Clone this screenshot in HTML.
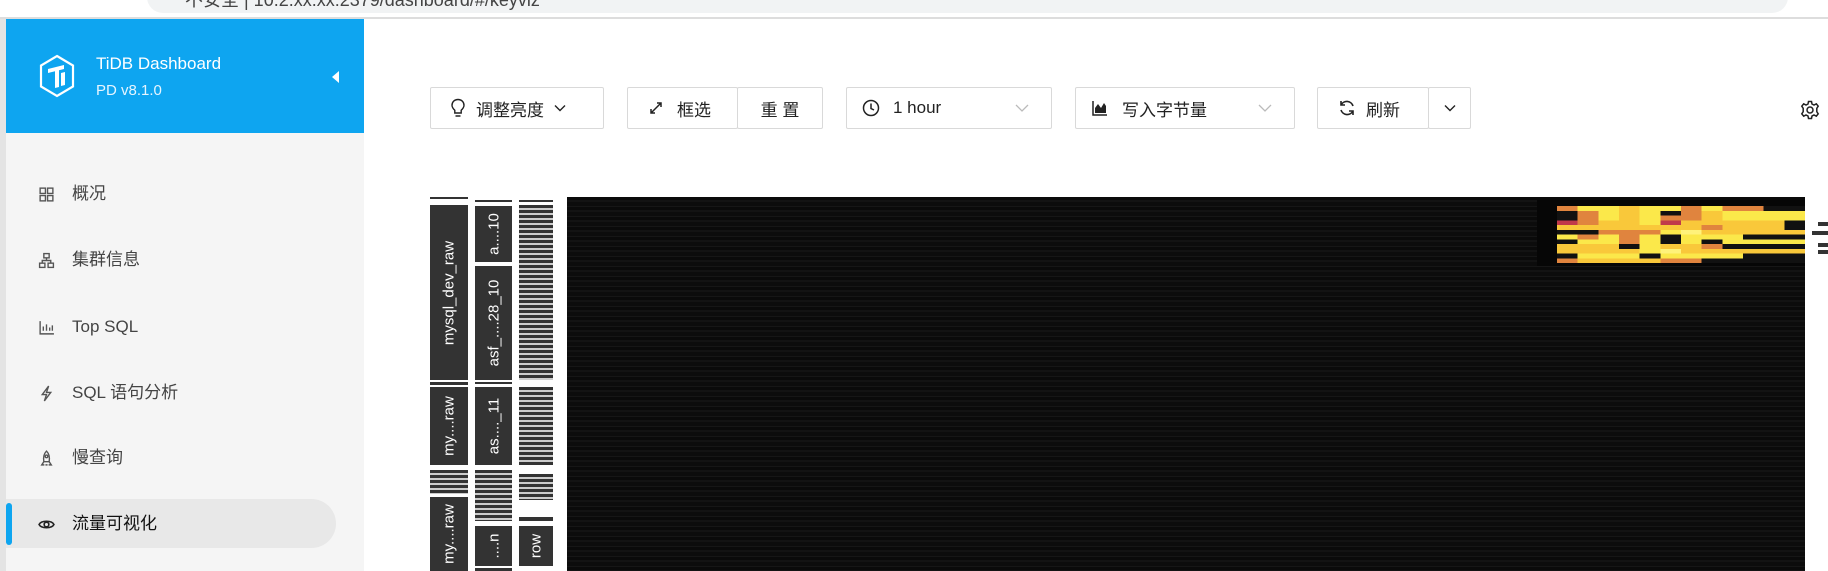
<!DOCTYPE html>
<html><head><meta charset="utf-8"><style>
*{margin:0;padding:0;box-sizing:border-box}
body{width:1828px;height:571px;overflow:hidden;background:#fff;font-family:"Liberation Sans","Noto Sans CJK SC",sans-serif;position:relative}
.abs{position:absolute}
.chrome{left:0;top:0;width:1828px;height:19px;background:#fff;border-bottom:2px solid #ddd}
.addr{left:147px;top:-20px;width:1641px;height:33px;background:#f1f3f4;border-radius:16px;overflow:hidden}
.side{left:0;top:19px;width:364px;height:552px;background:#f5f5f5;border-left:6px solid #e4e4e4}
.head{left:6px;top:19px;width:358px;height:114px;background:#0ea5f0}
.menu{left:72px;font-size:17px;color:#444;line-height:20px}
.mi{left:38px;width:17px;height:17px}
.btn{top:87px;height:42px;border:1px solid #d9d9d9;border-radius:2px;background:#fff;font-size:17px;color:#222;display:flex;align-items:center}
.lb{background:#333;color:#fff;font-size:15px}
.lb span{position:absolute;left:50%;top:50%;transform:translate(-50%,-50%) rotate(-90deg);white-space:nowrap}
.stripe{background:repeating-linear-gradient(#333 0 3px,#ccc 3px 5px)}
</style></head><body>
<div class="abs chrome"></div>
<div class="abs addr"><span class="abs" style="left:38px;top:6px;font-size:18px;color:#444">不安全 | 10.2.xx.xx:2379/dashboard/#/keyviz</span></div>

<div class="abs side"></div>
<div class="abs head"></div>
<svg class="abs" style="left:38px;top:54px" width="38" height="44" viewBox="0 0 38 44"><path d="M19 2 L35 11.5 V32.5 L19 42 L3 32.5 V11.5 Z" fill="none" stroke="#fff" stroke-width="2.2"/><path d="M10 15 L26 11 V15 L21 16.3 V33 L17 34 V17.3 L10 19 Z M23 19 L27 18 V31 L23 32 Z" fill="#fff"/></svg>
<div class="abs" style="left:96px;top:54px;font-size:17px;color:#fff">TiDB Dashboard</div>
<div class="abs" style="left:96px;top:82px;font-size:15px;color:#e6f5ff">PD v8.1.0</div>
<div class="abs" style="left:332px;top:71px;width:0;height:0;border-top:6px solid transparent;border-bottom:6px solid transparent;border-right:7px solid #fff"></div>

<div class="abs" style="left:6px;top:499px;width:330px;height:49px;background:#e8e8e8;border-radius:0 25px 25px 0"></div>
<div class="abs" style="left:6px;top:503px;width:6px;height:42px;background:#0ea5f0;border-radius:3px"></div>

<svg class="abs mi" style="top:186px" viewBox="0 0 16 16" fill="none" stroke="#555" stroke-width="1.3"><rect x="2" y="2" width="5" height="5"/><rect x="9" y="2" width="5" height="5"/><rect x="2" y="9" width="5" height="5"/><rect x="9" y="9" width="5" height="5"/></svg>
<div class="abs menu" style="top:184px">概况</div>
<svg class="abs mi" style="top:252px" viewBox="0 0 16 16" fill="none" stroke="#555" stroke-width="1.3"><rect x="5.5" y="1.5" width="5" height="4"/><rect x="1.5" y="10.5" width="5" height="4"/><rect x="9.5" y="10.5" width="5" height="4"/><path d="M8 5.5V8M4 10.5V8H12V10.5"/></svg>
<div class="abs menu" style="top:250px">集群信息</div>
<svg class="abs mi" style="top:319px" viewBox="0 0 16 16" fill="none" stroke="#555" stroke-width="1.3"><path d="M2 2V14H15M5 11V7M8 11V5M11 11V8M13.5 11V6"/></svg>
<div class="abs menu" style="top:317px">Top SQL</div>
<svg class="abs mi" style="top:385px" viewBox="0 0 16 16" fill="none" stroke="#555" stroke-width="1.3"><path d="M10 1L4 9H8L6 15L12 7H8Z"/></svg>
<div class="abs menu" style="top:383px">SQL 语句分析</div>
<svg class="abs mi" style="top:450px" viewBox="0 0 16 16" fill="none" stroke="#555" stroke-width="1.3"><path d="M8 1C5 4 5 8 5.5 11H10.5C11 8 11 4 8 1ZM5.5 11L3.5 14H6M10.5 11L12.5 14H10M7 14H9"/><circle cx="8" cy="6" r="1.2"/></svg>
<div class="abs menu" style="top:448px">慢查询</div>
<svg class="abs mi" style="top:516px" viewBox="0 0 16 16" fill="none" stroke="#222" stroke-width="1.5"><path d="M1 8C3 4 13 4 15 8C13 12 3 12 1 8Z"/><circle cx="8" cy="8" r="2.2"/></svg>
<div class="abs menu" style="top:514px;color:#111">流量可视化</div>

<!-- toolbar -->
<div class="abs btn" style="left:430px;width:174px"><svg style="margin-left:19px" width="16" height="20" viewBox="0 0 16 20" fill="none" stroke="#222" stroke-width="1.4"><path d="M8 1.5C4.5 1.5 2 4 2 7.2C2 9.5 3.5 11 4.8 12.3V15H11.2V12.3C12.5 11 14 9.5 14 7.2C14 4 11.5 1.5 8 1.5ZM5.5 18H10.5"/></svg><span style="margin-left:10px">调整亮度</span><svg style="margin-left:10px" width="12" height="8" viewBox="0 0 12 8" fill="none" stroke="#222" stroke-width="1.4"><path d="M1 1.5L6 6.5L11 1.5"/></svg></div>
<div class="abs btn" style="left:627px;width:111px"><svg style="margin-left:20px" width="16" height="16" viewBox="0 0 16 16" fill="none" stroke="#222" stroke-width="1.5"><path d="M3 13L13 3M9 3H13V7M3 9V13H7"/></svg><span style="margin-left:13px">框选</span></div>
<div class="abs btn" style="left:737px;width:86px;justify-content:center">重 置</div>
<div class="abs btn" style="left:846px;width:206px"><svg style="margin-left:15px" width="18" height="18" viewBox="0 0 18 18" fill="none" stroke="#222" stroke-width="1.5"><circle cx="9" cy="9" r="7.5"/><path d="M9 4.5V9.5L12 11"/></svg><span style="margin-left:13px">1 hour</span><svg style="margin-left:auto;margin-right:22px" width="14" height="8" viewBox="0 0 14 8" fill="none" stroke="#bbb" stroke-width="1.3"><path d="M1 1L7 7L13 1"/></svg></div>
<div class="abs btn" style="left:1075px;width:220px"><svg style="margin-left:16px" width="16" height="16" viewBox="0 0 16 16"><path d="M1 1V15H15" fill="none" stroke="#222" stroke-width="1.5"/><path d="M3 13V8L6 4L9 8L12 3L14 6V13Z" fill="#222"/></svg><span style="margin-left:14px">写入字节量</span><svg style="margin-left:auto;margin-right:22px" width="14" height="8" viewBox="0 0 14 8" fill="none" stroke="#bbb" stroke-width="1.3"><path d="M1 1L7 7L13 1"/></svg></div>
<div class="abs btn" style="left:1317px;width:112px"><svg style="margin-left:20px" width="18" height="18" viewBox="0 0 18 18" fill="none" stroke="#222" stroke-width="1.6"><path d="M15 7A6.5 6.5 0 0 0 3 6M3 11A6.5 6.5 0 0 0 15 12M3 2V6H7M15 16V12H11"/></svg><span style="margin-left:10px">刷新</span></div>
<div class="abs btn" style="left:1428px;width:43px;justify-content:center"><svg width="12" height="8" viewBox="0 0 12 8" fill="none" stroke="#222" stroke-width="1.4"><path d="M1 1.5L6 6.5L11 1.5"/></svg></div>
<svg class="abs" style="left:1800px;top:100px" width="20" height="20" viewBox="0 0 20 20" fill="none" stroke="#222" stroke-width="1.5"><path d="M8.5 1.5H11.5L12 4L14 5L16.3 3.8L18.2 6.2L16.8 8.3V11.7L18.2 13.8L16.3 16.2L14 15L12 16L11.5 18.5H8.5L8 16L6 15L3.7 16.2L1.8 13.8L3.2 11.7V8.3L1.8 6.2L3.7 3.8L6 5L8 4Z"/><circle cx="10" cy="10" r="3"/></svg>

<!-- labels -->
<div class="abs" style="left:430px;top:197px;width:38px;height:2px;background:#333"></div>
<div class="abs lb" style="left:430px;top:205px;width:38px;height:175px"><span>mysql_dev_raw</span></div>
<div class="abs" style="left:430px;top:382px;width:38px;height:3px;background:#333"></div>
<div class="abs lb" style="left:430px;top:387px;width:38px;height:78px"><span>my....raw</span></div>
<div class="abs stripe" style="left:430px;top:470px;width:38px;height:24px"></div>
<div class="abs lb" style="left:430px;top:497px;width:38px;height:74px"><span>my....raw</span></div>

<div class="abs" style="left:475px;top:200px;width:37px;height:2px;background:#333"></div>
<div class="abs lb" style="left:475px;top:206px;width:37px;height:56px"><span>a....10</span></div>
<div class="abs lb" style="left:475px;top:266px;width:37px;height:114px"><span>asf_....28_10</span></div>
<div class="abs" style="left:475px;top:382px;width:37px;height:2px;background:#333"></div>
<div class="abs lb" style="left:475px;top:387px;width:37px;height:78px"><span>as...._11</span></div>
<div class="abs stripe" style="left:475px;top:470px;width:37px;height:51px"></div>
<div class="abs lb" style="left:475px;top:526px;width:37px;height:40px"><span>....n</span></div>
<div class="abs" style="left:475px;top:568px;width:37px;height:3px;background:#333"></div>

<div class="abs" style="left:519px;top:200px;width:34px;height:2px;background:#333"></div>
<div class="abs stripe" style="left:519px;top:205px;width:34px;height:175px"></div>
<div class="abs stripe" style="left:519px;top:387px;width:34px;height:78px"></div>
<div class="abs stripe" style="left:519px;top:474px;width:34px;height:26px"></div>
<div class="abs" style="left:519px;top:517px;width:34px;height:4px;background:#333"></div>
<div class="abs lb" style="left:519px;top:526px;width:34px;height:40px"><span>row</span></div>

<!-- heatmap -->
<div class="abs" style="left:567px;top:197px;width:1238px;height:374px;background:repeating-linear-gradient(#0a0a0a 0 3px,#131313 3px 5px,#0c0c0c 5px 9px,#161616 9px 10px)"></div>
<div class="abs" style="left:1537px;top:200px;width:268px;height:66px;background:#060606"></div>
<svg class="abs" style="left:1557px;top:206px" width="248" height="57" viewBox="0 0 12 12" preserveAspectRatio="none" shape-rendering="crispEdges">
<rect x="0" y="0" width="1" height="1" fill="#e0843e"/><rect x="1" y="0" width="1" height="1" fill="#fbe84a"/><rect x="2" y="0" width="1" height="1" fill="#fbe84a"/><rect x="3" y="0" width="1" height="1" fill="#f9c83a"/><rect x="4" y="0" width="1" height="1" fill="#fbe84a"/><rect x="5" y="0" width="1" height="1" fill="#fbe84a"/><rect x="6" y="0" width="1" height="1" fill="#e0843e"/><rect x="7" y="0" width="1" height="1" fill="#fbe84a"/><rect x="8" y="0" width="2" height="1" fill="#e0843e"/><rect x="10" y="0" width="2" height="1" fill="#111"/>
<rect x="0" y="1" width="1" height="2" fill="#111"/><rect x="1" y="1" width="1" height="2" fill="#e0843e"/><rect x="2" y="1" width="1" height="2" fill="#fbe84a"/><rect x="3" y="1" width="1" height="2" fill="#f9c83a"/><rect x="4" y="1" width="1" height="2" fill="#fbe84a"/><rect x="5" y="1" width="1" height="1" fill="#111"/><rect x="5" y="2" width="1" height="1" fill="#e0843e"/><rect x="6" y="1" width="1" height="2" fill="#e0843e"/><rect x="7" y="1" width="1" height="2" fill="#f9c83a"/><rect x="8" y="1" width="4" height="2" fill="#fbe84a"/>
<rect x="0" y="3" width="12" height="2" fill="#f9c83a"/><rect x="0" y="3" width="1" height="1" fill="#c0384a"/><rect x="5" y="3" width="1" height="1" fill="#c0384a"/><rect x="1" y="3" width="1" height="1" fill="#e0843e"/><rect x="4" y="3" width="1" height="1" fill="#fbe84a"/><rect x="7" y="4" width="1" height="1" fill="#e0843e"/><rect x="11" y="3" width="1" height="2" fill="#111"/>
<rect x="0" y="5" width="1" height="1" fill="#111"/><rect x="1" y="5" width="1" height="1" fill="#111"/><rect x="2" y="5" width="3" height="1" fill="#e0843e"/><rect x="5" y="5" width="1" height="1" fill="#fbe84a"/><rect x="6" y="5" width="1" height="1" fill="#fff27a"/><rect x="7" y="5" width="5" height="1" fill="#f9c83a"/>
<rect x="0" y="6" width="12" height="2" fill="#fbe84a"/><rect x="1" y="6" width="1" height="1" fill="#e0843e"/><rect x="3" y="6" width="1" height="2" fill="#e0843e"/><rect x="5" y="6" width="1" height="2" fill="#111"/><rect x="7" y="7" width="1" height="1" fill="#111"/><rect x="0" y="7" width="1" height="1" fill="#111"/><rect x="9" y="6" width="3" height="1" fill="#111"/>
<rect x="0" y="8" width="12" height="2" fill="#f9c83a"/><rect x="3" y="8" width="1" height="1" fill="#111"/><rect x="4" y="8" width="1" height="2" fill="#fbe84a"/><rect x="7" y="8" width="1" height="1" fill="#e0843e"/><rect x="8" y="8" width="4" height="1" fill="#111"/><rect x="5" y="9" width="1" height="1" fill="#fff27a"/>
<rect x="0" y="10" width="12" height="1" fill="#fbe84a"/><rect x="0" y="10" width="1" height="1" fill="#111"/><rect x="4" y="10" width="1" height="1" fill="#111"/><rect x="9" y="10" width="3" height="1" fill="#111"/>
<rect x="0" y="11" width="1" height="1" fill="#e0843e"/><rect x="1" y="11" width="4" height="1" fill="#f9c83a"/><rect x="5" y="11" width="2" height="1" fill="#e0843e"/><rect x="7" y="11" width="5" height="1" fill="#111"/>
</svg>
<div class="abs" style="left:1818px;top:222px;width:10px;height:4px;background:#333"></div>
<div class="abs" style="left:1812px;top:231px;width:16px;height:4px;background:#333"></div>
<div class="abs" style="left:1818px;top:243px;width:10px;height:4px;background:#333"></div>
<div class="abs" style="left:1818px;top:250px;width:10px;height:4px;background:#333"></div>
</body></html>
